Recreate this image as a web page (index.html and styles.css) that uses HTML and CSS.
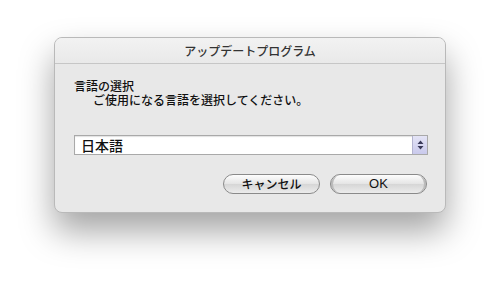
FILE: index.html
```html
<!DOCTYPE html>
<html lang="ja">
<head>
    <meta charset="UTF-8">
    <meta name="viewport" content="width=device-width, initial-scale=1.0">
    <title>アップデートプログラム</title>
    <link rel="stylesheet" href="styles.css">
</head>
<body>
    <div class="dialog">
        <div class="titlebar">アップデートプログラム</div>
        <div class="content">
            <div class="heading">言語の選択</div>
            <div class="hint">ご使用になる言語を選択してください。</div>
            <div class="popup">
                <span class="value">日本語</span>
                <span class="stepper">
                    <svg width="7" height="10" viewBox="0 0 7 10">
                        <path d="M3.5 0.5 L6.5 4 L0.5 4 Z M3.5 9.5 L6.5 6 L0.5 6 Z" fill="#3a3a5a"/>
                    </svg>
                </span>
            </div>
            <div class="buttons">
                <button class="btn">キャンセル</button>
                <button class="btn default">OK</button>
            </div>
        </div>
    </div>
</body>
</html>
```

FILE: styles.css
```css
* {
    box-sizing: border-box;
}
html, body {
    height: 100%;
}
body {
    margin: 0;
    padding-top: 37px;
    background: #fff;
    font-family: "Noto Sans CJK JP", "Liberation Sans", sans-serif;
    color: #111;
}
.dialog {
    margin-left: 54px;
    width: 392px;
    height: 176px;
    border: 1px solid #b9b9b9;
    border-radius: 8px;
    background: #e8e8e8;
    display: flex;
    flex-direction: column;
    overflow: hidden;
    box-shadow: 0 18px 34px rgba(0, 0, 0, 0.36);
}
.titlebar {
    height: 26px;
    background: linear-gradient(#f2f2f2, #e9e9e9);
    border-bottom: 1px solid #c6c6c6;
    text-align: center;
    font-size: 12px;
    font-weight: 500;
    line-height: 25px;
    color: #333;
}
.content {
    padding: 16px 18px 0 19px;
    flex: 1;
    display: flex;
    flex-direction: column;
}
.heading, .hint {
    font-family: "Liberation Sans", "Noto Sans CJK JP", sans-serif;
    font-size: 12px;
    font-weight: 500;
    line-height: 14px;
}
.hint {
    padding-left: 19px;
}
.popup {
    margin-top: 27px;
    height: 20px;
    width: 354px;
    border: 1px solid #a9a9a9;
    background: #fff;
    display: flex;
    align-items: center;
    box-shadow: inset 0 1px 1px rgba(0, 0, 0, 0.12);
}
.value {
    flex: 1;
    padding-left: 6px;
    font-size: 14px;
    font-weight: 500;
    line-height: 18px;
}
.stepper {
    width: 15px;
    height: 18px;
    background: linear-gradient(#e4e4f6, #c9c9ec);
    border-left: 1px solid #b4b4d0;
    display: flex;
    align-items: center;
    justify-content: center;
}
.buttons {
    margin-top: 19px;
    display: flex;
    justify-content: flex-end;
    gap: 10px;
}
.btn {
    width: 97px;
    height: 20px;
    border: 1px solid #8a8a8a;
    border-radius: 10px;
    background: linear-gradient(#fdfdfd, #e4e4e4 50%, #d6d6d6 51%, #ececec);
    font-family: inherit;
    font-size: 12px;
    font-weight: 500;
    line-height: 16px;
    color: #111;
    padding: 0;
}
.btn.default {
    font-family: "Liberation Sans", sans-serif;
    font-size: 13px;
    font-weight: normal;
    box-shadow: inset 3px 0 0 -1px #bbb, inset -3px 0 0 -1px #bbb;
}
```
